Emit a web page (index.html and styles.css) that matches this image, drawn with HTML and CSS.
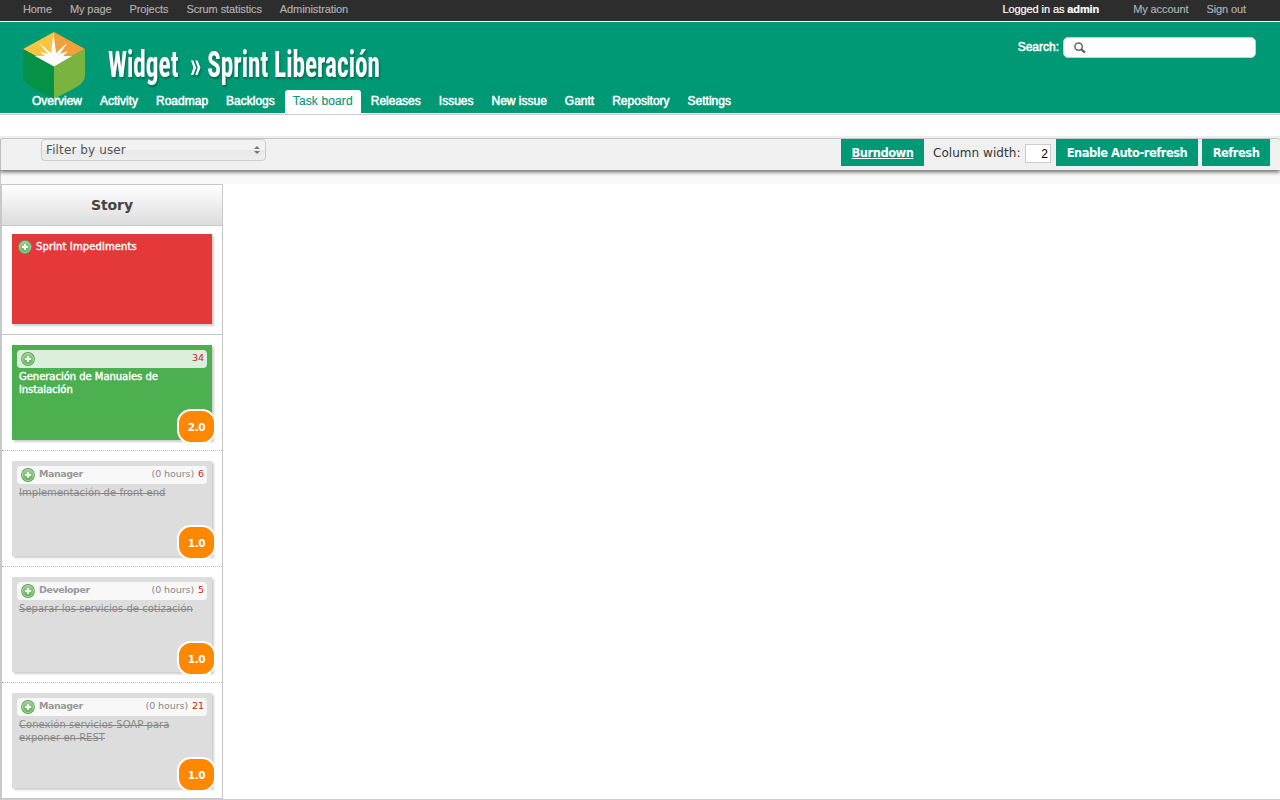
FILE: index.html
```html
<!DOCTYPE html>
<html lang="en">
<head>
<meta charset="utf-8">
<title>Widget » Sprint Liberación</title>
<link rel="stylesheet" href="styles.css">
</head>
<body>
<svg width="0" height="0" class="defs">
  <defs>
    <linearGradient id="ball" x1="0" y1="0" x2="0" y2="1">
      <stop offset="0" stop-color="#9bce93"/><stop offset="1" stop-color="#5fb352"/>
    </linearGradient>
    <symbol id="add" viewBox="0 0 14 14">
      <circle cx="7" cy="7" r="6.9" fill="#58a055"/>
      <circle cx="7" cy="7" r="5.6" fill="url(#ball)" stroke="#b9dfb1" stroke-width=".8"/>
      <path d="M7 4v6M4 7h6" stroke="#fff" stroke-width="2"/>
    </symbol>
  </defs>
</svg>
<nav class="top">
  <a>Home</a><a>My page</a><a>Projects</a><a>Scrum statistics</a><a>Administration</a>
  <div class="account"><span class="logged">Logged in as <b>admin</b></span><a>My account</a><a>Sign out</a></div>
</nav>
<header class="header">
  <div class="brand">
    <svg class="logo" width="62" height="68" viewBox="0 0 62 68">
      <path d="M31 0L0 17L31 34Z" fill="#f9c440"/>
      <path d="M31 0L62 17L31 34Z" fill="#efa13a"/>
      <path d="M0 17L31 34V67L10 56Q0 51 0 43Z" fill="#059247"/>
      <path d="M62 17L31 34V67L52 56Q62 51 62 43Z" fill="#79b441"/>
      <path d="M12 24L22 24L17 20L25 22L16 11L28 21L30.5 1L33 21L44 11L37 22L45 19L40 24L49 24L31 34.5Z" fill="#fff"/>
    </svg>
    <svg class="title" width="290" height="50">
      <text x="0" y="34" textLength="272" lengthAdjust="spacingAndGlyphs" xml:space="preserve">Widget  » Sprint Liberación</text>
    </svg>
    <div class="search">
      <label>Search:</label>
      <div class="field"><svg width="12" height="12" viewBox="0 0 12 12" fill="none" stroke="#666"><circle cx="4.6" cy="4.6" r="3.7" stroke-width="1.5"/><path d="M7.3 7.3L11 10.7" stroke-width="2.4"/></svg></div>
    </div>
  </div>
  <nav class="menu"><a>Overview</a><a>Activity</a><a>Roadmap</a><a>Backlogs</a><a class="active">Task board</a><a>Releases</a><a>Issues</a><a>New issue</a><a>Gantt</a><a>Repository</a><a>Settings</a></nav>
</header>
<main class="main">
  <div class="toolbar">
    <div class="select"><span>Filter by user</span><svg width="6" height="8" viewBox="0 0 6 8"><path d="M0 3L3 0L6 3ZM0 5L3 8L6 5Z" fill="#777"/></svg></div>
    <div class="tools">
      <a class="btn burn">Burndown</a>
      <label class="col">Column width:</label>
      <div class="num">2</div>
      <a class="btn auto">Enable Auto-refresh</a>
      <a class="btn refresh">Refresh</a>
    </div>
  </div>
  <div class="strip"></div>
  <section class="board">
    <h2>Story</h2>
    <div class="row first"><div class="card red"><svg width="14" height="14"><use href="#add"/></svg><span>Sprint Impediments</span></div></div>
    <div class="row"><div class="card green">
      <div class="meta"><svg width="14" height="14"><use href="#add"/></svg><span class="id">34</span></div>
      <p>Generación de Manuales de<br>instalación</p><div class="pts">2.0</div></div></div>
    <div class="row"><div class="card">
      <div class="meta"><svg width="14" height="14"><use href="#add"/></svg><b>Manager</b><span class="hours">(0 hours)</span><span class="id">6</span></div>
      <p>Implementación de front end</p><div class="pts">1.0</div></div></div>
    <div class="row"><div class="card">
      <div class="meta"><svg width="14" height="14"><use href="#add"/></svg><b>Developer</b><span class="hours">(0 hours)</span><span class="id">5</span></div>
      <p>Separar los servicios de cotización</p><div class="pts">1.0</div></div></div>
    <div class="row last"><div class="card">
      <div class="meta"><svg width="14" height="14"><use href="#add"/></svg><b>Manager</b><span class="hours">(0 hours)</span><span class="id">21</span></div>
      <p>Conexión servicios SOAP para<br>exponer en REST</p><div class="pts">1.0</div></div></div>
  </section>
</main>
</body>
</html>
```
FILE: styles.css
```css
* { box-sizing: border-box; }
body { margin: 0; width: 1280px; height: 800px; overflow: hidden; background: #fff; font-family: "DejaVu Sans", sans-serif; }
.defs { display: block; height: 0; }
.top { height: 22px; background: #2d2d2d; border-bottom: 1px solid #fff; display: flex; gap: 18px; padding: 0 34px 0 23px; font: 11px/19px "Liberation Sans", sans-serif; letter-spacing: -.1px; color: #b3b3b3; white-space: nowrap; -webkit-text-stroke: .15px currentColor; }
.account { margin-left: auto; display: flex; gap: 18px; }
.logged { color: #fff; margin-right: 16px; -webkit-text-stroke: .2px #fff; }
.header { height: 93px; background: #009975; border-bottom: 1px solid #ccc; box-shadow: inset 0 -1px #fff; }
.brand { height: 68px; display: flex; padding-left: 23px; }
.logo { margin: 10px 23px 0 0; flex: none; overflow: visible; }
.title { margin-top: 21px; font: bold 36px "Liberation Sans Narrow", "Roboto Condensed", Roboto, sans-serif; fill: #fff; filter: drop-shadow(1px 2px 1px rgba(0,0,0,.3)); overflow: visible; }
.title text { white-space: pre; }
.search { margin: 15px 24px 0 auto; display: flex; font: 12px/20px "Liberation Sans", sans-serif; color: #fff; -webkit-text-stroke: .5px #fff; gap: 4px; }
.field { width: 193px; height: 21px; background: #fff; border: 1px solid #ccc; border-radius: 5px; padding: 4px 10px; display: flex; }
.menu { position: relative; display: flex; height: 24px; padding-left: 24px; gap: 2px; font: 12px/22px "Liberation Sans", sans-serif; color: #fff; white-space: nowrap; }
.menu a { padding: 0 8px; -webkit-text-stroke: .5px currentColor; }
.menu .active { background: #fff; color: #009975; border-radius: 3px 3px 0 0; letter-spacing: .13px; -webkit-text-stroke: .15px currentColor; }
.main { padding-top: 21px; height: 685px; border-bottom: 1px solid #ccc; }
.toolbar { position: relative; height: 34px; border-top: 2px solid #eee; background: #f0f0f0; box-shadow: inset 0 1px #c6c6c6, inset 1px 0 #bbb, 0 2px 4px rgba(0,0,0,.6); border-radius: 4px 4px 0 0; clip-path: inset(0 0 -8px 0); display: flex; padding: 1px 10px 0 41px; justify-content: space-between; }
.select { width: 225px; height: 22px; border: 1px solid #ccc; border-radius: 4px; background: linear-gradient(#f2f2f2 50%, #e8e8e8 50%, #eee); display: flex; justify-content: space-between; align-items: center; padding: 0 5px 0 4px; font-size: 12px; color: #555; letter-spacing: .12px; }
.tools { display: flex; font-size: 12px; color: #333; line-height: 28px; white-space: nowrap; }
.btn { background: #009975; color: #fff; height: 27px; font-weight: bold; font-size: 11.5px; text-align: center; letter-spacing: -.5px; }
.burn { width: 83px; text-decoration: underline; }
.col { width: 92px; margin-left: 9px; letter-spacing: .05px; }
.num { width: 26px; height: 19px; margin: 5px 5px 0 0; background: #fff; border: 1px solid #ccc; text-align: right; padding-right: 2px; line-height: 19px; color: #000; font-family: "Liberation Sans", sans-serif; }
.auto { width: 142px; margin-right: 4px; }
.refresh { width: 68px; }
.strip { height: 14px; background: #f9f9f9; border-left: 1px solid #ccc; }
.board { width: 223px; height: 615px; border: 1px solid #c8c8c8; border-left: 2px solid #c8c8c8; }
h2 { margin: 0; height: 41px; border-bottom: 1px solid #c8c8c8; background: linear-gradient(#fff, #dcdcdc); text-align: center; font-size: 14px; line-height: 41px; color: #444; letter-spacing: -.1px; }
.row { height: 116px; border-bottom: 1px dotted #bbb; padding: 10px; }
.row.first { height: 109px; border-bottom: 1px solid #c8c8c8; padding-top: 8px; }
.row.last { border: 0; }
.card { position: relative; width: 200px; height: 95px; background: #ddd; box-shadow: 2px 2px 2px rgba(0,0,0,.2); padding: 5px; font-size: 10px; letter-spacing: .03px; color: #888; }
.red { height: 90px; background: #e53939; color: #fff; display: flex; gap: 4px; padding-left: 6px; line-height: 15px; letter-spacing: .12px; -webkit-text-stroke: .4px #fff; }
.red svg { margin-top: 1px; }
.green { background: #4caf50; color: #fff; }
.green p { text-decoration: none; letter-spacing: -.03px; -webkit-text-stroke: .4px #fff; }
.meta { height: 18px; border-radius: 4px; background: rgba(255,255,255,.8); display: flex; padding: 0 3px 0 4px; font-size: 9.5px; line-height: 16px; letter-spacing: -.08px; }
.meta svg { margin: 2px 4px 0 0; }
.meta b { letter-spacing: -.45px; color: #999; }
.hours { margin-left: auto; }
.id { margin-left: 4px; color: #c92222; }
.green .id { margin-left: auto; }
p { margin: 2px 0 0 2px; line-height: 13px; text-decoration: line-through; white-space: nowrap; }
.pts { position: absolute; left: 165px; top: 64px; width: 39px; height: 35px; border: 2px solid #fff; border-radius: 14px; background: #f80; color: #fff; font-weight: bold; font-size: 10.5px; line-height: 33px; text-align: center; letter-spacing: -.4px; -webkit-text-stroke: 0; }
```
